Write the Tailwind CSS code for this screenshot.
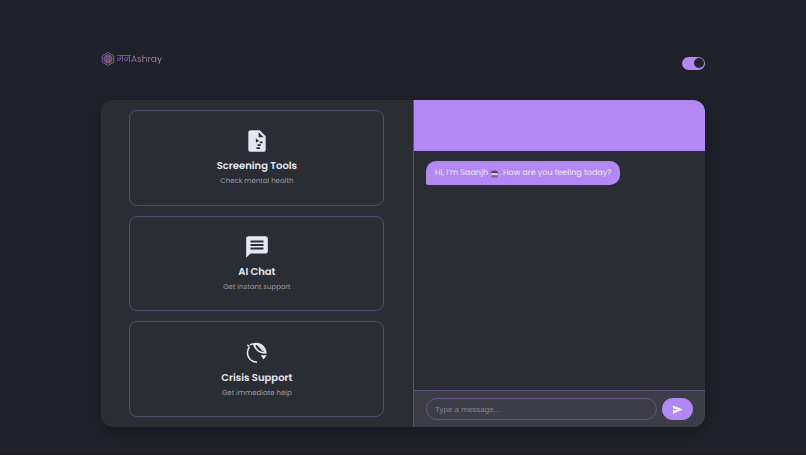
<!DOCTYPE html>
<html lang="en">
<head>
<meta charset="utf-8">
<meta name="viewport" content="width=device-width, initial-scale=1">
<title>मनAshray</title>
<script src="https://cdn.jsdelivr.net/npm/@tailwindcss/browser@4"></script>
</head>
<body class="flex min-h-screen flex-col border-b-2 border-[#1b1b1d] bg-[#1f222a] font-['Poppins','Inter','Noto_Sans',sans-serif] text-[#e4e8f4] [text-rendering:geometricPrecision]">
<div class="mx-auto flex w-3/4 grow flex-col pt-[49px] pb-[26px]">
  <header class="mb-[31px] flex h-5 items-center justify-between">
    <a href="#" class="flex items-center gap-[2px]">
      <svg class="size-[14px]" viewBox="0 0 28 28" fill="none" aria-hidden="true">
        <defs><linearGradient id="brand" x1="0" y1="0" x2="1" y2="1"><stop stop-color="#7468c4"/><stop offset="1" stop-color="#bd7187"/></linearGradient></defs>
        <path d="M14 1 25.5 7.5v13L14 27 2.500 20.500v-13Z" stroke="url(#brand)" stroke-width="1.600"/>
        <circle cx="14" cy="14" r="9" fill="url(#brand)" opacity=".8"/>
        <path d="M14 6v16M10 8c-3 1-3 5-1 6-2 2-1 5 2 6M18 8c3 1 3 5 1 6 2 2 1 5-2 6M10 12l4 3 4-3" stroke="#332f4d" stroke-width="1.300"/>
      </svg>
      <span class="bg-linear-to-r from-[#786bc7] to-[#c97c82] bg-clip-text pt-px text-[9px] leading-4 text-transparent">मनAshray</span>
    </a>
    <label class="relative mt-2 flex h-[13px] w-[23px] cursor-pointer items-center rounded-full bg-[#b388f5]">
      <input type="checkbox" role="switch" checked aria-label="Dark mode" class="peer absolute inset-0 m-0 size-full cursor-pointer appearance-none rounded-full">
      <span class="pointer-events-none ml-px size-[10px] rounded-full bg-[#24242e] peer-checked:ml-[12px]"></span>
    </label>
  </header>

  <main class="grid grow grid-cols-[312fr_292fr] overflow-hidden rounded-xl bg-[#2b2d35] shadow-[0_5px_16px_rgba(0,0,0,0.3)]">
    <nav class="grid grid-rows-3 gap-[10px] py-[10px] pr-[29px] pl-7" aria-label="Support options">
      <a href="#" class="flex flex-col items-center justify-center rounded-lg border border-[#554b70] pt-[2px] pl-px">
        <svg class="size-[26px]" viewBox="0 0 24 24" fill="currentColor" aria-hidden="true">
          <path fill-rule="evenodd" d="M6 2h8.500L20 7.500V20a2 2 0 0 1-2 2H6a2 2 0 0 1-2-2V4c0-1.100.9-2 2-2Zm7.500 2v4.500h4.700ZM11 9.500v4l2.800-1.500Zm3.500 3v1.500h2.700v-1.500ZM12.500 15v1.500h3V15Zm-1 2.800v1.500h3.200v-1.500Z"/>
        </svg>
        <h2 class="mt-1 text-[10px] leading-4 font-semibold">Screening Tools</h2>
        <p class="text-[7px] leading-[15px] text-[#9b9ca5]">Check mental health</p>
      </a>
      <a href="#" class="flex flex-col items-center justify-center rounded-lg border border-[#554b70] pt-[2px] pl-px">
        <svg class="size-[26px]" viewBox="0 0 24 24" fill="currentColor" aria-hidden="true">
          <path fill-rule="evenodd" d="M4 2h16a2 2 0 0 1 2 2v12a2 2 0 0 1-2 2H6l-4 4V4c0-1.100.9-2 2-2Zm2 4v1.800h12V6Zm0 3.200V11h12V9.200Zm0 3.200v1.800h12v-1.800Z"/>
        </svg>
        <h2 class="mt-1 text-[10px] leading-4 font-semibold">AI Chat</h2>
        <p class="text-[7px] leading-[15px] text-[#9b9ca5]">Get instant support</p>
      </a>
      <a href="#" class="flex flex-col items-center justify-center rounded-lg border border-[#554b70] pt-[2px] pl-px">
        <svg class="size-[26px]" viewBox="0 0 24 24" fill="none" stroke="currentColor" aria-hidden="true">
          <path d="M5 6.500C1 12 4 20 12 20.500M3 4.500 5 6M5.500 4.500 8 3.500" stroke-width="1.400"/>
          <path d="M8 3c5-1.500 12 .5 13 9.500-6 .8-11.500-2.500-13-9.500Z" fill="currentColor" stroke="none"/>
          <path d="M10.500 4.500c3 0 6.500 2.500 8 6.500-3.500 0-7-2.500-8-6.500Z" fill="#2b2d35" stroke="none"/>
          <path d="M12.500 4.500c2 1.500 4 3.500 5.500 6" stroke-width="1.300"/>
          <path d="M15.500 14H21l-3 4Z" fill="currentColor" stroke="none"/>
        </svg>
        <h2 class="mt-1 text-[10px] leading-4 font-semibold">Crisis Support</h2>
        <p class="text-[7px] leading-[15px] text-[#9b9ca5]">Get immediate help</p>
      </a>
    </nav>

    <section class="flex flex-col border-l border-[#5b5078]" aria-label="Chat">
      <div class="h-[51px] bg-[#b388f5]"></div>
      <div class="grow px-3 py-[10px]">
        <p class="flex h-6 w-fit items-center rounded-[10px] rounded-bl-[2px] bg-[#b388f5] px-[9px] text-[8px] whitespace-pre text-[#eee7fc]">Hi, I’m Saanjh <svg class="size-[9px]" viewBox="0 0 18 18" role="img" aria-label="Ninja"><path d="M3 9c0-9 12-9 12 0v4H3Z" fill="#6c6470"/><path d="M2 5h14v3H2Z" fill="#453b48"/><path d="M3 8h12v4H3Z" fill="#e8c9cb"/><path d="M2 17c0-6 14-6 14 0Z" fill="#756b7e"/><path d="m1 3 4 3-3 2Z" fill="#b64c68"/></svg>. How are you feeling today?</p>
      </div>
      <form class="flex items-center gap-[5px] border-t border-[#5f547b] bg-[#3c3d47] px-3 py-[7px]" onsubmit="return false">
        <input type="text" aria-label="Message" placeholder="Type a message..." class="h-[22px] min-w-0 grow rounded-full border border-[#675985] bg-transparent px-2 font-['Liberation_Sans',sans-serif] text-[8px] text-[#e4e8f4] outline-none placeholder:text-[#85868d]">
        <button type="submit" aria-label="Send" class="flex h-[22px] w-[31px] shrink-0 items-center justify-center rounded-full bg-[#b388f5] text-white">
          <svg class="size-[11px]" viewBox="0 0 24 24" fill="currentColor" aria-hidden="true"><path d="M2 21 23 12 2 3v7l13 2-13 2Z"/></svg>
        </button>
      </form>
    </section>
  </main>
</div>
</body>
</html>
